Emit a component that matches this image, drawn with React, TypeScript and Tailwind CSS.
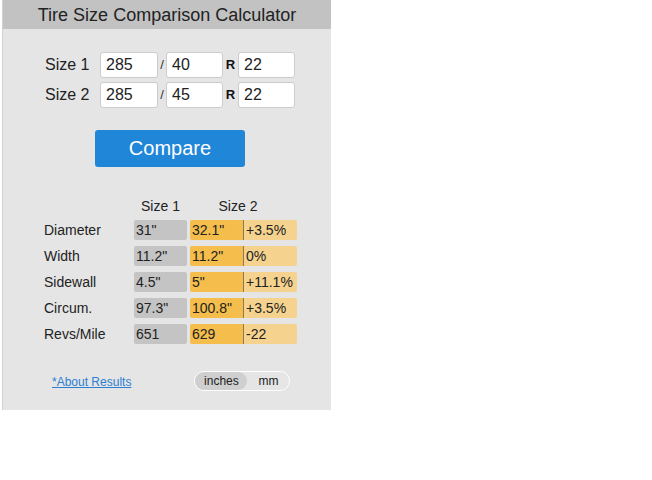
import React, { useState } from 'react';

const rows = [
    { label: 'Diameter', a: '31"', b: '32.1"', diff: '+3.5%' },
    { label: 'Width', a: '11.2"', b: '11.2"', diff: '0%' },
    { label: 'Sidewall', a: '4.5"', b: '5"', diff: '+11.1%' },
    { label: 'Circum.', a: '97.3"', b: '100.8"', diff: '+3.5%' },
    { label: 'Revs/Mile', a: '651', b: '629', diff: '-22' },
];

function SizeRow({ label, w, r, d }: { label: string; w: string; r: string; d: string }) {
    const input = "h-[26px] rounded-[3px] border border-[#cccccc] bg-white px-[5px] text-[16px] text-[#222] outline-none";
    return (
        <div className="flex items-center h-[26px]">
            <span className="w-[55px] text-[16px] text-[#222]">{label}</span>
            <input defaultValue={w} className={`${input} w-[58px]`} />
            <span className="w-[8px] text-center text-[13px] text-[#333]">/</span>
            <input defaultValue={r} className={`${input} w-[57px]`} />
            <span className="w-[15px] text-center text-[13px] font-bold text-[#111]">R</span>
            <input defaultValue={d} className={`${input} w-[57px]`} />
        </div>
    );
}

export default function App() {
    const [unit, setUnit] = useState('inches');

    return (
        <div className="w-[652px] h-[480px] bg-white" style={{ fontFamily: '"Liberation Sans", Arial, sans-serif' }}>
            <div className="ml-[2px] w-[329px] h-[410px] bg-[#e5e5e5] border-l border-[#d2d2d2] flex flex-col">
                {/* Header */}
                <div className="h-[29px] bg-[#c2c2c2] flex items-center justify-center pt-[1px] text-[18px] text-[#222]">
                    Tire Size Comparison Calculator
                </div>

                {/* Size inputs */}
                <div className="pl-[42px] pt-[23px] flex flex-col gap-[4px]">
                    <SizeRow label="Size 1" w="285" r="40" d="22" />
                    <SizeRow label="Size 2" w="285" r="45" d="22" />
                </div>

                <div className="pl-[92px] pt-[22px]">
                    <button className="w-[150px] h-[37px] rounded-[3px] bg-[#1f86d8] text-white text-[20px] pb-[1px]">
                        Compare
                    </button>
                </div>

                {/* Results */}
                <div className="pl-[40px] pt-[30px]">
                    <div className="flex h-[18px] items-center text-[14px] text-[#222]">
                        <span className="w-[91px]" />
                        <span className="w-[53px] text-center">Size 1</span>
                        <span className="w-[104px] text-center pr-[2px]">Size 2</span>
                    </div>
                    <div className="mt-[5px] flex flex-col gap-[6px]">
                        {rows.map(row => (
                            <div key={row.label} className="flex items-center h-[20px] text-[14px] text-[#222]">
                                <span className="w-[91px] pl-[1px]">{row.label}</span>
                                <span className="w-[53px] h-[20px] rounded-[2px] bg-[#c4c4c4] pl-[2px] leading-[20px]">{row.a}</span>
                                <span className="ml-[3px] w-[54px] h-[20px] rounded-l-[2px] bg-[#f4bd4c] border-r border-[#8a7a5c] pl-[2px] leading-[20px]">{row.b}</span>
                                <span className="w-[53px] h-[20px] rounded-r-[2px] bg-[#f5d38e] pl-[2px] leading-[20px]">{row.diff}</span>
                            </div>
                        ))}
                    </div>
                </div>

                {/* Footer */}
                <div className="flex items-center pt-[27px]">
                    <a href="#" className="ml-[49px] mt-[2px] text-[12px] text-[#2a7fd3] underline">*About Results</a>
                    <div className="ml-[63px] flex h-[20px] w-[96px] rounded-full border border-white text-[12px] text-[#222]">
                        <button
                            onClick={() => setUnit('inches')}
                            className={unit === 'inches' ? 'w-[52px] rounded-full bg-[#cfcfcf]' : 'w-[52px]'}
                        >
                            inches
                        </button>
                        <button
                            onClick={() => setUnit('mm')}
                            className={unit === 'mm' ? 'flex-1 rounded-full bg-[#cfcfcf]' : 'flex-1'}
                        >
                            mm
                        </button>
                    </div>
                </div>
            </div>
        </div>
    );
}
